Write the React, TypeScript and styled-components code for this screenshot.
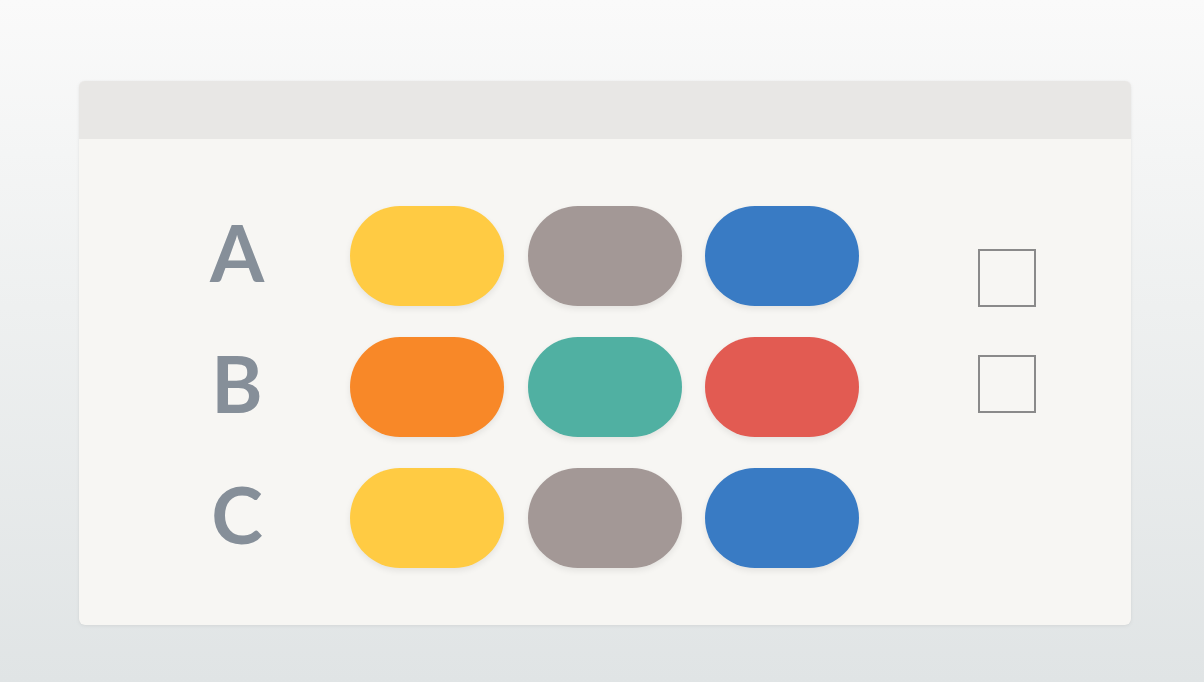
import { createGlobalStyle, styled } from "styled-components";

const GlobalStyle = createGlobalStyle`
  html, body {
    margin: 0;
    padding: 0;
  }
  body {
    min-height: 100vh;
    background: linear-gradient(180deg, #fafafa 0%, #eef0f0 45%, #e0e4e5 100%);
    font-family: "Lato", "Open Sans", sans-serif;
  }
`;

const rows = [
  { label: "A", colors: ["#ffcb43", "#a39896", "#397bc4"] },
  { label: "B", colors: ["#f88828", "#50b0a2", "#e25b52"] },
  { label: "C", colors: ["#ffcb43", "#a39896", "#397bc4"] },
];

export default function App() {
  return (
    <>
      <GlobalStyle />
      <StyledPage>
        <StyledCard>
          <StyledHeader />
          <StyledBody>
            <StyledRows>
              {rows.map((row) => (
                <StyledRow key={row.label}>
                  <StyledLabel>{row.label}</StyledLabel>
                  <StyledPills>
                    {row.colors.map((c, i) => (
                      <StyledPill key={i} $color={c} />
                    ))}
                  </StyledPills>
                </StyledRow>
              ))}
            </StyledRows>
            <StyledChecks>
              <StyledCheckbox type="button" aria-label="option 1" />
              <StyledCheckbox type="button" aria-label="option 2" />
            </StyledChecks>
          </StyledBody>
        </StyledCard>
      </StyledPage>
    </>
  );
}

// Styled components
const StyledPage = styled("div")`
  padding: 81px 73px 57px 79px;
`;

const StyledCard = styled("div")`
  width: 1052px;
  border-radius: 6px;
  overflow: hidden;
  background: #f7f6f3;
  box-shadow: 0 1px 4px rgba(0, 0, 0, 0.06), 0 0 1px rgba(0, 0, 0, 0.08);
`;

const StyledHeader = styled("div")`
  height: 58px;
  background: #e8e7e5;
`;

const StyledBody = styled("div")`
  display: flex;
  align-items: flex-start;
  padding: 67px 0 57px 91px;
`;

const StyledRows = styled("div")`
  display: flex;
  flex-direction: column;
  gap: 31px;
`;

const StyledRow = styled("div")`
  display: flex;
  align-items: center;
`;

const StyledLabel = styled("div")`
  width: 134px;
  margin-right: 46px;
  padding-bottom: 8px;
  text-align: center;
  font-size: 78px;
  font-weight: 700;
  line-height: 92px;
  color: #868f99;
`;

const StyledPills = styled("div")`
  display: flex;
  gap: 23.5px;
`;

const StyledPill = styled("div")<{ $color: string }>`
  width: 154px;
  height: 100px;
  border-radius: 50px;
  background: ${(p) => p.$color};
  box-shadow: 0 3px 6px rgba(0, 0, 0, 0.08);
`;

const StyledChecks = styled("div")`
  display: flex;
  flex-direction: column;
  gap: 48px;
  margin-left: 119px;
  padding-top: 43px;
`;

const StyledCheckbox = styled("button")`
  width: 58px;
  height: 58px;
  padding: 0;
  border: 2px solid #8a8a8a;
  background: transparent;
  box-sizing: border-box;
  cursor: pointer;
`;
